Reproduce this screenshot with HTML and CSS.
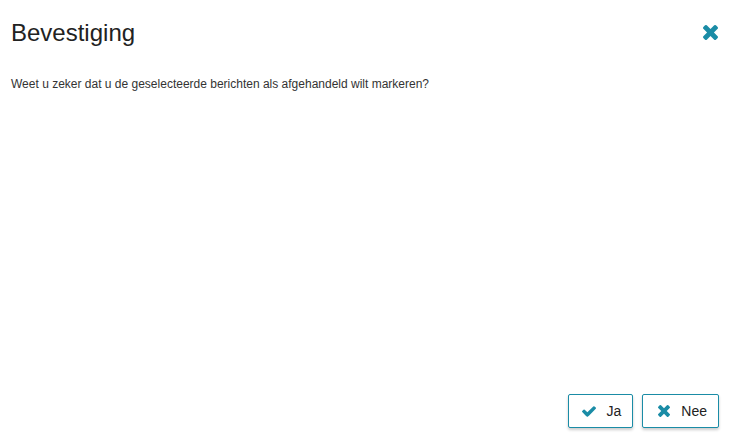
FILE: index.html
```html
<!DOCTYPE html>
<html lang="nl">
<head>
    <meta charset="UTF-8">
    <meta name="viewport" content="width=device-width, initial-scale=1.0">
    <title>Bevestiging</title>
    <link rel="stylesheet" href="styles.css">
</head>
<body>
    <div class="dialog">
        <div class="dialog-header">
            <h2>Bevestiging</h2>
            <button class="close-btn" title="Sluiten">
                <svg class="icon-times" viewBox="302 366 1188 1188"><path d="M1490 1322q0 40-28 68l-136 136q-28 28-68 28t-68-28l-294-294-294 294q-28 28-68 28t-68-28l-136-136q-28-28-28-68t28-68l294-294-294-294q-28-28-28-68t28-68l136-136q28-28 68-28t68 28l294 294 294-294q28-28 68-28t68 28l136 136q28 28 28 68t-28 68l-294 294 294 294q28 28 28 68z"/></svg>
            </button>
        </div>

        <div class="dialog-body">
            <p>Weet u zeker dat u de geselecteerde berichten als afgehandeld wilt markeren?</p>
        </div>

        <div class="dialog-footer">
            <button class="btn">
                <svg class="icon-check" viewBox="121 334 1550 1188"><path d="M1671 566q0 40-28 68l-724 724-136 136q-28 28-68 28t-68-28l-136-136-362-362q-28-28-28-68t28-68l136-136q28-28 68-28t68 28l294 295 656-657q28-28 68-28t68 28l136 136q28 28 28 68z"/></svg>
                <span>Ja</span>
            </button>
            <button class="btn">
                <svg class="icon-small-times" viewBox="302 366 1188 1188"><path d="M1490 1322q0 40-28 68l-136 136q-28 28-68 28t-68-28l-294-294-294 294q-28 28-68 28t-68-28l-136-136q-28-28-28-68t28-68l294-294-294-294q-28-28-28-68t28-68l136-136q28-28 68-28t68 28l294 294 294-294q28-28 68-28t68 28l136 136q28 28 28 68t-28 68l-294 294 294 294q28 28 28 68z"/></svg>
                <span>Nee</span>
            </button>
        </div>
    </div>
</body>
</html>
```

FILE: styles.css
```css
* {
    margin: 0;
    padding: 0;
    box-sizing: border-box;
}

body {
    font-family: 'Liberation Sans', Arial, sans-serif;
    background: #fff;
    color: #222;
    height: 100vh;
}

.dialog {
    height: 100%;
    display: flex;
    flex-direction: column;
}

.dialog-header {
    height: 66px;
    display: flex;
    align-items: center;
    justify-content: space-between;
    padding: 0 17px 0 11px;
}

h2 {
    font-size: 24px;
    font-weight: 400;
    color: #222;
}

.close-btn {
    background: none;
    border: none;
    cursor: pointer;
    display: flex;
    margin-top: -2px;
}

.icon-times {
    width: 15px;
    height: 15px;
    fill: #1a8ca6;
}

.dialog-body {
    flex: 1;
    padding: 10px 11px 0;
}

.dialog-body p {
    font-size: 12px;
    line-height: 16px;
    color: #333;
}

.dialog-footer {
    display: flex;
    justify-content: flex-end;
    gap: 9px;
    padding: 0 16px 17px;
}

.btn {
    height: 34px;
    display: flex;
    align-items: center;
    gap: 11px;
    padding: 0 11px 0 13px;
    background: #fff;
    border: 1px solid #1a8ca6;
    border-radius: 2px;
    box-shadow: 0 2px 3px rgba(0, 0, 0, 0.2);
    font-family: 'Liberation Sans', Arial, sans-serif;
    font-size: 14px;
    color: #222;
    cursor: pointer;
}

.icon-check {
    width: 14px;
    height: 11px;
    fill: #1a8ca6;
}

.icon-small-times {
    width: 12px;
    height: 12px;
    fill: #1a8ca6;
    margin-left: 2px;
}
```
